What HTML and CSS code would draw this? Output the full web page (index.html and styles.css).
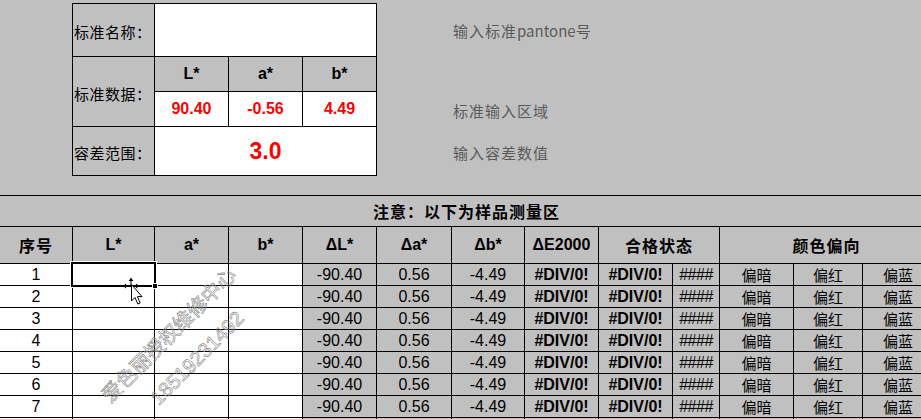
FILE: index.html
```html
<!DOCTYPE html>
<html lang="zh-CN">
<head>
<meta charset="utf-8">
<title>色差测量表</title>
<link rel="stylesheet" href="styles.css">
</head>
<body>
<div class="sheet">
  <section class="top">
    <div class="std">
      <div class="c lbl">标准名称：</div>
      <div class="c inp span3"></div>
      <div class="c lbl tall">标准数据：</div>
      <div class="c hd">L*</div>
      <div class="c hd">a*</div>
      <div class="c hd">b*</div>
      <div class="c val">90.40</div>
      <div class="c val">-0.56</div>
      <div class="c val">4.49</div>
      <div class="c lbl">容差范围：</div>
      <div class="c inp tol span3">3.0</div>
    </div>
    <div class="notes">
      <p class="note n1">输入标准<span class="latin">pantone</span>号</p>
      <p class="note n2">标准输入区域</p>
      <p class="note n3">输入容差数值</p>
    </div>
  </section>

  <section class="meas">
    <div class="m notice">注意：以下为样品测量区</div>

    <div class="m h cjk">序号</div>
    <div class="m h">L*</div>
    <div class="m h">a*</div>
    <div class="m h">b*</div>
    <div class="m h">ΔL*</div>
    <div class="m h">Δa*</div>
    <div class="m h">Δb*</div>
    <div class="m h">ΔE2000</div>
    <div class="m h cjk span2">合格状态</div>
    <div class="m h cjk span3">颜色偏向</div>

    <div class="m w">1</div><div class="m w"></div><div class="m w"></div><div class="m w"></div>
    <div class="m g">-90.40</div><div class="m g">0.56</div><div class="m g">-4.49</div>
    <div class="m g b">#DIV/0!</div><div class="m g b">#DIV/0!</div><div class="m g hash">####</div>
    <div class="m g zh">偏暗</div><div class="m g zh">偏红</div><div class="m g zh">偏蓝</div>

    <div class="m w">2</div><div class="m w"></div><div class="m w"></div><div class="m w"></div>
    <div class="m g">-90.40</div><div class="m g">0.56</div><div class="m g">-4.49</div>
    <div class="m g b">#DIV/0!</div><div class="m g b">#DIV/0!</div><div class="m g hash">####</div>
    <div class="m g zh">偏暗</div><div class="m g zh">偏红</div><div class="m g zh">偏蓝</div>

    <div class="m w">3</div><div class="m w"></div><div class="m w"></div><div class="m w"></div>
    <div class="m g">-90.40</div><div class="m g">0.56</div><div class="m g">-4.49</div>
    <div class="m g b">#DIV/0!</div><div class="m g b">#DIV/0!</div><div class="m g hash">####</div>
    <div class="m g zh">偏暗</div><div class="m g zh">偏红</div><div class="m g zh">偏蓝</div>

    <div class="m w">4</div><div class="m w"></div><div class="m w"></div><div class="m w"></div>
    <div class="m g">-90.40</div><div class="m g">0.56</div><div class="m g">-4.49</div>
    <div class="m g b">#DIV/0!</div><div class="m g b">#DIV/0!</div><div class="m g hash">####</div>
    <div class="m g zh">偏暗</div><div class="m g zh">偏红</div><div class="m g zh">偏蓝</div>

    <div class="m w">5</div><div class="m w"></div><div class="m w"></div><div class="m w"></div>
    <div class="m g">-90.40</div><div class="m g">0.56</div><div class="m g">-4.49</div>
    <div class="m g b">#DIV/0!</div><div class="m g b">#DIV/0!</div><div class="m g hash">####</div>
    <div class="m g zh">偏暗</div><div class="m g zh">偏红</div><div class="m g zh">偏蓝</div>

    <div class="m w">6</div><div class="m w"></div><div class="m w"></div><div class="m w"></div>
    <div class="m g">-90.40</div><div class="m g">0.56</div><div class="m g">-4.49</div>
    <div class="m g b">#DIV/0!</div><div class="m g b">#DIV/0!</div><div class="m g hash">####</div>
    <div class="m g zh">偏暗</div><div class="m g zh">偏红</div><div class="m g zh">偏蓝</div>

    <div class="m w">7</div><div class="m w"></div><div class="m w"></div><div class="m w"></div>
    <div class="m g">-90.40</div><div class="m g">0.56</div><div class="m g">-4.49</div>
    <div class="m g b">#DIV/0!</div><div class="m g b">#DIV/0!</div><div class="m g hash">####</div>
    <div class="m g zh">偏暗</div><div class="m g zh">偏红</div><div class="m g zh">偏蓝</div>

    <div class="m w"></div><div class="m w"></div><div class="m w"></div><div class="m w"></div>
    <div class="m g"></div><div class="m g"></div><div class="m g"></div>
    <div class="m g"></div><div class="m g"></div><div class="m g"></div>
    <div class="m g"></div><div class="m g"></div><div class="m g"></div>
  </section>

  <div class="selection"></div>
  <div class="handle"></div>
  <svg class="cursor" width="30" height="34" viewBox="0 0 30 34">
    <g stroke="#000" stroke-width="1" fill="none">
      <path d="M5 12 H21 M13 4 V12"/>
    </g>
    <path d="M5 12 L8 9.5 L8 14.5 Z M21 12 L18 9.5 L18 14.5 Z M13 4 L10.5 7 L15.5 7 Z" fill="#000"/>
    <path d="M13.5 10.5 L13.5 27 L17 23.5 L19.8 30 L22.2 29 L19.4 22.6 L24 22.6 Z" fill="#fff" stroke="#000" stroke-width="1" stroke-linejoin="miter"/>
  </svg>

  <svg class="wm" width="200" height="180" viewBox="0 0 200 180">
    <text class="wm-zh" x="88" y="84" transform="rotate(-45 88 84)">爱色丽授权维修中心</text>
    <text class="wm-num" x="117" y="108" transform="rotate(-45 117 108)">18519231492</text>
  </svg>
</div>
</body>
</html>
```

FILE: styles.css
```css
html, body {
  margin: 0;
  padding: 0;
}

body {
  background: #c0c0c0;
  font-family: "Liberation Sans", "Noto Sans CJK SC", sans-serif;
  color: #000;
}

.sheet {
  position: relative;
  width: 921px;
  height: 419px;
  overflow: hidden;
  background: #c0c0c0;
}

/* ---------- top standard block ---------- */
.top {
  height: 195px;
  display: flex;
  align-items: flex-start;
  box-sizing: border-box;
  padding: 3px 0 0 72px;
}

.std {
  display: grid;
  grid-template-columns: 81px 73px 73px 73px;
  grid-template-rows: 52px 34px 34px 48px;
  gap: 1px;
  padding: 1px;
  background: #000;
}

.c {
  display: flex;
  align-items: center;
  justify-content: center;
  background: #c0c0c0;
}

.lbl {
  justify-content: flex-start;
  padding-left: 1px;
  padding-top: 3px;
  box-sizing: border-box;
  font-family: "Noto Sans CJK SC", sans-serif;
  font-size: 15px;
  letter-spacing: 0.5px;
}

.tall {
  grid-row: span 2;
}

.span3 {
  grid-column: span 3;
}

.inp {
  background: #fff;
}

.hd {
  font-weight: bold;
  font-size: 16px;
}

.val {
  background: #fff;
  color: #ff0000;
  font-weight: bold;
  font-size: 16px;
}

.tol {
  color: #ff0000;
  font-weight: bold;
  font-size: 23px;
}

.notes {
  margin-left: 76px;
  padding-top: 18px;
}

.note {
  margin: 0;
  height: 20px;
  line-height: 20px;
  font-family: "Noto Sans CJK SC", sans-serif;
  font-size: 15px;
  letter-spacing: 1px;
  color: #5a5a5a;
}

.latin {
  letter-spacing: 0;
}

.n2 {
  margin-top: 60px;
}

.n3 {
  margin-top: 22px;
}

/* ---------- measurement table ---------- */
.meas {
  display: grid;
  width: max-content;
  grid-template-columns: 72px 81px 73px 73px 73px 74px 72px 73px 73px 46px 73px 68px 70px;
  grid-template-rows: 30px 36px;
  grid-auto-rows: 21px;
  gap: 1px;
  padding-top: 1px;
  background: #000;
}

.m {
  display: flex;
  align-items: center;
  justify-content: center;
  background: #c0c0c0;
  font-size: 16px;
  white-space: nowrap;
  overflow: hidden;
}

.notice {
  grid-column: 1 / -1;
  font-family: "Noto Sans CJK SC", sans-serif;
  font-weight: bold;
  font-size: 16px;
  letter-spacing: 1px;
}

.h {
  font-weight: bold;
}

.cjk {
  font-family: "Noto Sans CJK SC", sans-serif;
  letter-spacing: 1px;
}

.span2 {
  grid-column: span 2;
}

.w {
  background: #fff;
}

.g {
  background: #c0c0c0;
}

.b {
  font-weight: bold;
}

.hash {
  font-size: 16px;
  letter-spacing: -0.5px;
}

.zh {
  font-family: "Noto Sans CJK SC", sans-serif;
  font-size: 15px;
}

/* ---------- overlays ---------- */
.selection {
  position: absolute;
  left: 71px;
  top: 262px;
  width: 85px;
  height: 25px;
  box-sizing: border-box;
  border: 2px solid #000;
  outline: 1px solid #fff;
}

.handle {
  position: absolute;
  left: 152px;
  top: 283px;
  width: 4px;
  height: 4px;
  background: #000;
  border: 1px solid #fff;
}

.cursor {
  position: absolute;
  left: 118px;
  top: 274px;
}

.wm {
  position: absolute;
  left: 80px;
  top: 250px;
  pointer-events: none;
}

.wm text {
  fill: none;
  stroke: #858585;
  stroke-width: 0.6;
  text-anchor: middle;
  dominant-baseline: central;
  font-size: 20px;
}

.wm-zh {
  font-family: "Noto Sans CJK SC", sans-serif;
}

.wm-num {
  font-family: "Liberation Sans", sans-serif;
}
```
